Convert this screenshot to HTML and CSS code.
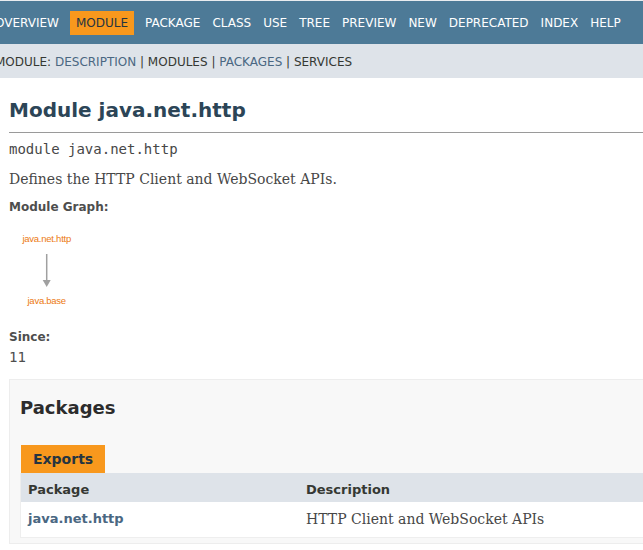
FILE: index.html
```html
<!DOCTYPE html>
<html lang="en">
<head>
<meta charset="utf-8">
<title>java.net.http</title>
<link rel="stylesheet" href="styles.css">
</head>
<body>
<header class="page-header">
  <nav class="top-nav">
    <ul class="nav-list">
      <li>Overview</li>
      <li class="current">Module</li>
      <li>Package</li>
      <li>Class</li>
      <li>Use</li>
      <li>Tree</li>
      <li>Preview</li>
      <li>New</li>
      <li>Deprecated</li>
      <li>Index</li>
      <li>Help</li>
    </ul>
  </nav>
  <div class="sub-nav">
    <span>Module:&nbsp;</span><a class="link">Description</a><span>&nbsp;|&nbsp;</span><span>Modules</span><span>&nbsp;|&nbsp;</span><a class="link">Packages</a><span>&nbsp;|&nbsp;</span><span>Services</span>
  </div>
</header>
<main class="content">
  <h1 class="title">Module java.net.http</h1>
  <hr class="rule">
  <div class="signature">module java.net.http</div>
  <div class="block">Defines the HTTP Client and WebSocket APIs.</div>
  <dl class="notes">
    <dt>Module Graph:</dt>
    <dd class="graph">
      <svg width="100" height="101" viewBox="0 0 100 101">
        <text x="37.7" y="22.7" class="node" text-anchor="middle">java.net.http</text>
        <line x1="37.7" y1="35" x2="37.7" y2="62" stroke="#a0a0a0" stroke-width="1.5"/>
        <polygon points="33.7,61 41.7,61 37.7,68" fill="#a0a0a0"/>
        <text x="37.7" y="85" class="node" text-anchor="middle">java.base</text>
      </svg>
    </dd>
    <dt>Since:</dt>
    <dd class="since">11</dd>
  </dl>
  <section class="summary">
    <h2 class="summary-title">Packages</h2>
    <div class="caption"><span>Exports</span></div>
    <div class="summary-table">
      <div class="cell head first">Package</div>
      <div class="cell head last">Description</div>
      <div class="cell first"><a class="pkg">java.net.http</a></div>
      <div class="cell last desc">HTTP Client and WebSocket APIs</div>
    </div>
  </section>
</main>
</body>
</html>
```
FILE: styles.css
```css
html, body {
  margin: 0;
  padding: 0;
  overflow: hidden;
  background: #ffffff;
}
body {
  font-family: "DejaVu Sans", Arial, sans-serif;
  font-size: 14px;
  color: #353833;
  border-top: 1px solid #e8ecf0;
}
.page-header {
  display: block;
}
.top-nav {
  background: #4d7a97;
  height: 43px;
  box-sizing: border-box;
  padding-top: 10px;
  overflow: hidden;
}
.nav-list {
  list-style: none;
  margin: 0 0 0 -11px;
  padding: 0;
  display: flex;
  white-space: nowrap;
  font-size: 12px;
  color: #ffffff;
}
.nav-list li {
  padding: 5px 6px;
  text-transform: uppercase;
  line-height: 14px;
}
.nav-list li.current {
  background: #f8981d;
  color: #253441;
  margin: 0 5px;
}
.sub-nav {
  background: #dee3e9;
  height: 34px;
  box-sizing: border-box;
  padding: 11px 0 0 0;
  margin-left: -5px;
  font-size: 12px;
  line-height: 14px;
  text-transform: uppercase;
  white-space: nowrap;
  color: #353833;
}
.sub-nav .link {
  color: #4a6782;
}
.content {
  width: 720px;
  padding: 0 0 0 9px;
}
.title {
  margin: 20px 0 0 0;
  font-size: 20px;
  line-height: 24px;
  font-weight: bold;
  color: #2c4557;
}
.rule {
  margin: 10px 0 0 0;
  border: 0;
  border-top: 1px solid #9a9a9a;
  height: 0;
}
.signature {
  margin-top: 8px;
  font-family: "DejaVu Sans Mono", monospace;
  font-size: 14px;
  line-height: 17px;
  color: #474747;
}
.block {
  margin-top: 13px;
  font-family: "DejaVu Serif", Georgia, serif;
  font-size: 14px;
  line-height: 17px;
  color: #474747;
}
.notes {
  margin: 0;
}
.notes dt {
  margin: 12px 0 0 0;
  font-size: 12px;
  line-height: 14px;
  font-weight: bold;
  color: #4e4e4e;
}
.notes dt + dd + dt {
  margin-top: 10px;
}
.notes dd {
  margin: 5px 0 0 0;
}
.graph svg {
  display: block;
}
.node {
  font-family: "Liberation Sans", Arial, sans-serif;
  font-size: 9.5px;
  fill: #ec7a12;
  letter-spacing: -0.25px;
}
.since {
  font-family: "DejaVu Sans Mono", monospace;
  font-size: 14px;
  line-height: 16px;
  color: #4e4e4e;
}
.summary {
  margin-top: 14px;
  border: 1px solid #ededed;
  background: #f8f8f8;
  padding: 0 20px 5px 10px;
}
.summary-title {
  margin: 17px 0 0 0;
  font-size: 18px;
  line-height: 21px;
  font-weight: bold;
  color: #2c2c2c;
}
.caption {
  margin-top: 27px;
  padding-left: 1px;
  display: flex;
}
.caption span {
  background: #f8981d;
  color: #253441;
  font-weight: bold;
  font-size: 14px;
  line-height: 16px;
  padding: 5.5px 12px 6.5px 12px;
}
.summary-table {
  display: grid;
  grid-template-columns: 278px 1fr;
  border-left: 1px solid #eeeeee;
  border-right: 1px solid #eeeeee;
  border-bottom: 1px solid #eeeeee;
  background: #ffffff;
}
.cell {
  box-sizing: border-box;
  padding: 8px 3px 0 7px;
  font-size: 13px;
  line-height: 18.2px;
}
.cell.head {
  background: #dee3e9;
  font-weight: bold;
  height: 29px;
}
.cell.first:not(.head),
.cell.last:not(.head) {
  height: 35px;
}
.cell.first:not(.head) {
  padding-top: 7.5px;
}
.pkg {
  color: #4a6782;
  font-weight: bold;
}
.desc {
  font-family: "DejaVu Serif", Georgia, serif;
  font-size: 14px;
  line-height: 19.6px;
  color: #474747;
  padding-top: 8px;
}
```
